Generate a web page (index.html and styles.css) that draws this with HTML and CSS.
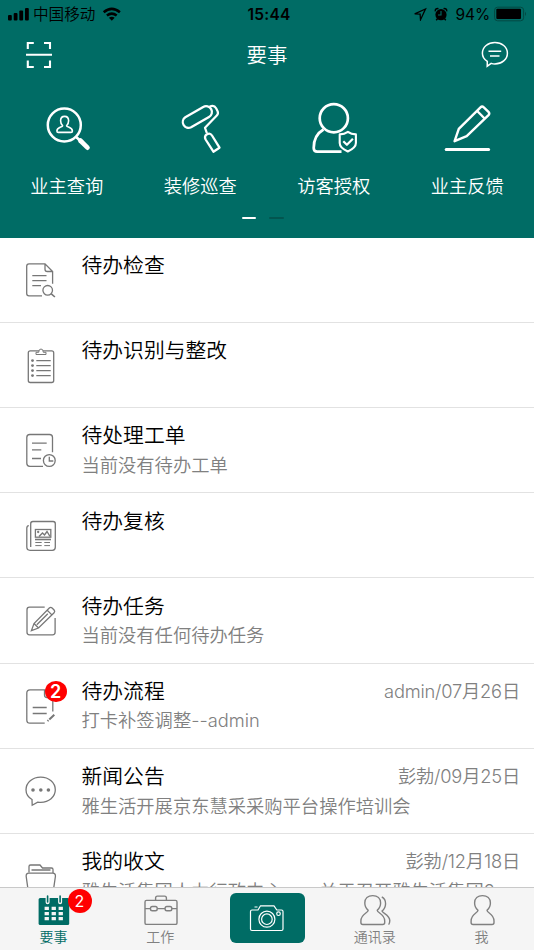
FILE: index.html
```html
<!DOCTYPE html>
<html lang="zh-CN">
<head>
<meta charset="utf-8">
<title>要事</title>
<link rel="stylesheet" href="styles.css">
</head>
<body>
<div class="screen">
  <header class="top">
    <div class="status">
      <div class="status-side">
        <svg class="signal" width="22" height="14" viewBox="8 6 22 14"><rect x="8" y="14" width="3.8" height="5.4" rx="1"/><rect x="13.7" y="12" width="3.8" height="7.4" rx="1"/><rect x="19.3" y="9.5" width="3.8" height="9.9" rx="1"/><rect x="25" y="7" width="3.8" height="12.4" rx="1"/></svg>
        <span class="carrier">中国移动</span>
        <svg class="wifi" width="20" height="14" viewBox="102.500 6 20 14"><g fill="none" stroke="#000" stroke-width="2.5"><path d="M104.200 11.300q8.100-6.800 16.200 0"/><path d="M107.400 14.600q4.900-3.900 9.800 0"/></g><path d="M109.400 16.700q2.900-2.100 5.800 0l-2.900 3z"/></svg>
      </div>
      <div class="clock">15:44</div>
      <div class="status-side status-right">
        <svg width="14" height="14" viewBox="416 6 14 14"><path d="M417.700 12.900 428.500 8l-5 10.700-.4-5.600z" fill="none" stroke="#000" stroke-width="1.300"/></svg>
        <svg class="alarm" width="14" height="14" viewBox="437 6 14 14"><circle cx="444" cy="13.700" r="5.600"/><path d="M438.300 10.300q-.6-3 3.200-2.700M449.700 10.300q.6-3-3.200-2.700M440.500 17.800l-1.300 1.500M447.500 17.800l1.300 1.500" fill="none" stroke="#000" stroke-width="1.400"/><path d="M444 10v4h-3" fill="none" stroke="#006c65" stroke-width="1.100"/></svg>
        <span class="percent">94%</span>
        <svg class="battery" width="34" height="16" viewBox="494 5.500 34 16"><rect x="494.600" y="6.700" width="29" height="13.600" rx="3" fill="none" stroke="#034943" stroke-width="1"/><rect x="496.300" y="8.300" width="24.700" height="10.200" rx="1"/><path d="M525 11.300q2 2 0 4.300z" fill="#034943"/></svg>
      </div>
    </div>
    <div class="nav">
      <svg width="30" height="30" viewBox="24 39.500 30 30" fill="none" stroke="#fff" stroke-width="2.100"><path d="M27.800 48.500v-6H33.800M44 42.500h6v6M50 60v6.500h-6M33.800 66.500h-6V60M26 54.300h26"/></svg>
      <h1>要事</h1>
      <svg width="30" height="30" viewBox="480 40 30 30" fill="none" stroke="#fff" stroke-width="1.500"><path d="M487.300 61.300c-3.100-1.900-4.900-4.900-4.900-8.100 0-6.100 5.600-10.800 12.500-10.800s12.500 4.700 12.500 10.800S501.800 64 494.900 64c-1.300 0-2.600-.2-3.700-.6l-4 2.800z"/><path d="M488.500 51.300h12.700M490 56h9.500"/></svg>
    </div>
    <div class="tiles">
      <div class="tile">
        <svg width="60" height="60" viewBox="36.700 99 60 60" fill="none" stroke="#fff" stroke-linejoin="round" stroke-linecap="round"><circle cx="64" cy="125" r="16.500" stroke-width="2.500"/><path d="M76.500 137.500l4 4" stroke-width="2.500"/><path d="M80 140.500l7.200 7.200" stroke-width="4.600"/><path d="M62.300 125.800c-1.500-1.500-2-3.200-2-5 0-2.700 1.600-4.400 4-4.400s4 1.700 4 4.400c0 1.800-.5 3.500-2 5 .3 1.500 5.800 1.400 5.800 5.200 0 1-.5 1.400-1.400 1.400H58c-.9 0-1.400-.4-1.400-1.400 0-3.800 5.400-3.700 5.700-5.200z" stroke-width="1.600"/></svg>
        <span>业主查询</span>
      </div>
      <div class="tile">
        <svg width="60" height="60" viewBox="170 99 60 60" fill="none" stroke="#fff" stroke-width="2.300" stroke-linejoin="round"><path d="M185.300 117.300 203.200 106.900a5.800 5.800 0 0 1 5.800 10.100L191.100 127.300a5.800 5.800 0 0 1-5.800-10z"/><path d="M209.500 106.700c3.500-1.600 5.300-.8 6.600 1.500l1.400 2.700c.8 1.600.5 3.200-.7 4.500L205 127.800l1.900 5.400" stroke-width="2.200"/><path d="M205.600 139.500 213.400 151.700 219.500 147.700 212 135.500c-2.600-4.100-8.600-.4-6.400 4z"/></svg>
        <span>装修巡查</span>
      </div>
      <div class="tile">
        <svg width="60" height="60" viewBox="303.500 99 60 60" fill="none" stroke="#fff" stroke-width="2.700" stroke-linejoin="round"><circle cx="333.300" cy="118.200" r="14.100"/><path d="M323 129.500c-6.600 3.800-9.800 10.500-9.800 18.500 0 2.600 1.200 3.600 3.500 3.600H341"/><path d="M339.200 134.400q4.800-.2 8.200-2.600 3.400 2.400 8 2.600v8.700c0 3.800-3.500 6.400-8.100 8.400-4.600-2-8.100-4.600-8.100-8.400z" stroke-width="2.100"/><path d="M342.800 141.200l3.600 3.600 6-6" stroke-width="2.200"/></svg>
        <span>访客授权</span>
      </div>
      <div class="tile">
        <svg width="60" height="60" viewBox="437 99 60 60" fill="none" stroke="#fff" stroke-width="2.400" stroke-linejoin="round"><path d="M454.600 141.200 458.800 128.800 480.500 107.300q1.600-1.600 3.300 0l4.700 4.600q1.500 1.600 0 3.200L466.700 136.200z"/><path d="M477.200 111l7.400 7.500"/><path d="M446.200 149.400H488.600" stroke-width="3" stroke-linecap="round"/></svg>
        <span>业主反馈</span>
      </div>
    </div>
    <div class="pager"><i class="on"></i><i></i></div>
  </header>

  <main class="list">
    <section class="row">
      <svg class="icon" viewBox="21 22 40 40"><path d="M52.600 45.700V33.500L45 25.900H29q-2.300 0-2.300 2.300V55.500q0 2.300 2.300 2.300H42M45 25.900v5.300q0 2.300 2.300 2.300h5.300M32.300 37.700H46.500M32.300 42.700H46.500M32.300 47.700H41"/><circle cx="47.700" cy="52.300" r="4.800"/><path d="M51.300 55.800l3.600 3.200" stroke-width="1.600"/></svg>
      <div class="body"><div class="line"><h2>待办检查</h2></div></div>
    </section>
    <section class="row">
      <svg class="icon" viewBox="21 22 40 40"><rect x="28.300" y="27.800" width="25.400" height="31.700" rx="2"/><path d="M36 31.500V29.300h2.700q0-3.300 2.300-3.300t2.300 3.300H46v2.200z" fill="#fff" stroke-width="1"/><path d="M36.300 37.600H50.700M36.300 42.600H50.700M36.300 47.600H50.700M36.300 52.600H50.700"/><g class="solid"><circle cx="32.500" cy="37.600" r="1.400"/><circle cx="32.500" cy="42.600" r="1.400"/><circle cx="32.500" cy="47.600" r="1.400"/><circle cx="32.500" cy="52.600" r="1.400"/></g></svg>
      <div class="body"><div class="line"><h2>待办识别与整改</h2></div></div>
    </section>
    <section class="row">
      <svg class="icon" viewBox="21 22 40 40"><path d="M52.500 44.300V29.500q0-3-3-3h-19.700q-3 0-3 3V55.300q0 3 3 3H43M32 35.200H46.700M32 41.900H41.300M32 50.500H41"/><circle cx="49.300" cy="52.500" r="5.900"/><path d="M49.300 48.800V53h4"/></svg>
      <div class="body"><div class="line"><h2>待处理工单</h2></div><p>当前没有待办工单</p></div>
    </section>
    <section class="row">
      <svg class="icon" viewBox="21 22 40 40"><path d="M30.700 54V30.700q0-2.200 2.200-2.200H53.100q2.200 0 2.200 2.200V54.300q0 3-3 3H30q-3.200 0-3.200-3.200V35.300q0-2.300 2-2.600"/><rect x="35.400" y="36.500" width="15.400" height="7.700"/><path d="M39 43.500l3.500-3.500 2 2 2.500-3.500 3 5" stroke-width="1.400"/><circle cx="38.200" cy="39" r=".5"/><path d="M35 46.500H51" stroke-width="1.600"/><path d="M35.300 49.500h6.400M44.300 49.500H50M35.300 52.600h6.400M44.300 52.600H50" stroke-width="1"/></svg>
      <div class="body"><div class="line"><h2>待办复核</h2></div></div>
    </section>
    <section class="row">
      <svg class="icon" viewBox="21 22 40 40"><path d="M44.700 29.200H29.500q-2.500 0-2.500 2.500V54.300q0 2.500 2.500 2.500H52.600q2.500 0 2.500-2.500V40"/><path d="M31.400 52.600 34 45.500 49.300 30q1.400-1.200 2.800 0l2 2q1.200 1.400 0 2.800L38.500 50zM47.200 32.200l4.700 4.700M34 45.500l4.500 4.500M36.800 46.800l11-11"/></svg>
      <div class="body"><div class="line"><h2>待办任务</h2></div><p>当前没有任何待办任务</p></div>
    </section>
    <section class="row">
      <svg class="icon" viewBox="21 22 40 40"><path d="M52.800 47.500V33.500L45 25.900H30q-3.200 0-3.200 3.200V55.900q0 3.200 3.200 3.200H44.700M44.500 26v5q0 2.500 2.500 2.500h5.800M32.700 43.500H46.700M32.700 49.500H46.700"/><path d="M47.500 57l1-.8M49.300 55.500l5-4.800" stroke-width="2"/></svg>
      <b class="badge row-badge">2</b>
      <div class="body"><div class="line"><h2>待办流程</h2><time>admin/07月26日</time></div><p>打卡补签调整--admin</p></div>
    </section>
    <section class="row">
      <svg class="icon" viewBox="21 22 40 40"><path d="M32 50.500c-3.800-2.200-6-5.700-6-9.700 0-7.200 6.500-12.700 14.700-12.700s14.600 5.500 14.600 12.700-6.400 12.500-14.600 12.500c-1 0-2-.1-3-.2l-5.500 3.100z"/><g class="solid"><circle cx="33" cy="41" r="1.800"/><circle cx="40.800" cy="41" r="1.800"/><circle cx="48.400" cy="41" r="1.800"/></g></svg>
      <div class="body"><div class="line"><h2>新闻公告</h2><time>彭勃/09月25日</time></div><p>雅生活开展京东慧采采购平台操作培训会</p></div>
    </section>
    <section class="row">
      <svg class="icon" viewBox="21 22 40 40"><path d="M29 38.500V32.500q0-1.500 1.500-1.500H40l2.500 3H51.500q1.500 0 1.500 1.500v3.500M31.500 36H50.500" /><path d="M26.200 42.500q-.3-3.300 2.700-3.300H52.700q3 0 2.700 3.300L53 59H28.500z"/></svg>
      <div class="body"><div class="line"><h2>我的收文</h2><time>彭勃/12月18日</time></div><p>雅生活集团人力行政中心——关于召开雅生活集团2…</p></div>
    </section>
  </main>

  <nav class="tabs">
    <div class="tab active">
      <svg width="48" height="34" viewBox="29.400 893 48 34"><rect x="39" y="898" width="30.600" height="27" rx="1.500" fill="#006c65"/><path d="M48 895.500v6.800M60.500 895.500v6.800" stroke="#f5f5f5" stroke-width="4" stroke-linecap="round"/><path d="M48 896v6M60.500 896v6" stroke="#006c65" stroke-width="1.600" stroke-linecap="round"/><path d="M45 908.400h4.300m2.700 0h4.300m2.700 0h4.300M45 913.600h4.300m2.700 0h4.300m2.700 0h4.300M45 918.600h4.300m2.700 0h4.300m2.700 0h4.300" stroke="#f5f5f5" stroke-width="3.300"/></svg>
      <b class="badge tab-badge">2</b>
      <span>要事</span>
    </div>
    <div class="tab">
      <svg width="48" height="34" viewBox="136.200 893 48 34"><rect x="145.200" y="900.400" width="32" height="24" rx="1.500"/><path d="M155.800 900.400v-2.500q0-1.800 1.800-1.800h7.200q1.800 0 1.800 1.800v2.500M145.200 908.600h5.500M157.500 908.600h7.700M172 908.600h5.200"/><rect x="150.700" y="906.500" width="6.700" height="4.200" rx="1.800"/><rect x="165.300" y="906.500" width="6.700" height="4.200" rx="1.800"/></svg>
      <span>工作</span>
    </div>
    <div class="tab tab-camera">
      <div class="camera">
        <svg width="40" height="32" viewBox="247 902 40 32" fill="none" stroke="#fff" stroke-width="1.200" stroke-linejoin="round"><path d="M252 910h6l2.500-4.200H274l2.800 4.200H281.500q1.500 0 1.500 1.500V929q0 1.500-1.500 1.500H252q-1.500 0-1.500-1.500V911.500q0-1.500 1.500-1.500zM254.500 907h3"/><circle cx="266.900" cy="919.200" r="8"/><circle cx="266.900" cy="919.200" r="5.300"/><circle cx="278.500" cy="913.700" r="1.800"/></svg>
      </div>
    </div>
    <div class="tab shifted">
      <svg width="48" height="34" viewBox="350.500 893 48 34"><path d="M367.700 910.300c-2.300-2-3.400-4.500-3.400-7.300 0-4.500 3.200-7.400 7.900-7.400s7.900 2.900 7.900 7.400c0 2.800-1.100 5.300-3.400 7.300 0 2.800 7.500 3.300 7.500 10.700v1.500q0 2-2 2H362.400q-2 0-2-2V921c0-7.400 7.300-7.900 7.300-10.700zM381.300 896.900c5.300 3 4.700 10.500.2 14.200 1 2.500 7.600 4 7.800 9.500q0 2.500-1.200 4"/></svg>
      <span>通讯录</span>
    </div>
    <div class="tab shifted">
      <svg width="48" height="34" viewBox="457.800 893 48 34"><path d="M477.800 910.300c-2.300-2-3.400-4.500-3.400-7.300 0-4.500 3.200-7.400 7.900-7.400s7.900 2.900 7.900 7.400c0 2.800-1.100 5.300-3.400 7.300 0 2.800 7 3.300 7 10.700v1.500q0 2-2 2H472.900q-2 0-2-2V921c0-7.400 6.900-7.900 6.900-10.700z"/></svg>
      <span>我</span>
    </div>
  </nav>
</div>
</body>
</html>
```
FILE: styles.css
```css
* { box-sizing: border-box; }
body {
  margin: 0;
  font-family: Inter, "Noto Sans CJK SC", sans-serif;
  font-weight: 350;
  color: #000;
  background: #fff;
}
h1, h2, p { margin: 0; font-weight: inherit; }
svg { display: block; flex: none; }
.screen {
  width: 534px;
  height: 950px;
  display: flex;
  flex-direction: column;
  overflow: hidden;
}
.top {
  flex: none;
  height: 237.600px;
  background: #006c65;
  color: #fff;
}
.status {
  height: 27px;
  padding: 0 6px 0 8px;
  display: grid;
  grid-template-columns: 1fr auto 1fr;
  align-items: center;
  color: #000;
  line-height: 27px;
}
.status-side { display: flex; align-items: center; }
.status-right { justify-content: flex-end; }
.status-right svg:first-child { margin-right: 2px; }
.carrier { font-size: 15.600px; margin-left: 3px; padding-top: 1px; }
.wifi { margin-left: 7px; }
.clock { font-size: 15.500px; font-weight: 600; letter-spacing: 0.200px; padding-left: 2px; }
.alarm { margin-left: 5px; }
.percent { font-size: 15.500px; font-weight: 400; letter-spacing: -0.100px; margin: 0 4px 0 7px; }
.nav {
  height: 55px;
  padding: 0 24px;
  display: flex;
  align-items: center;
  justify-content: space-between;
}
.nav h1 { font-size: 20.500px; line-height: 30px; padding-top: 2px; }
.tiles {
  display: grid;
  grid-template-columns: repeat(4, 1fr);
  padding-top: 17px;
}
.tile {
  display: flex;
  flex-direction: column;
  align-items: center;
  font-size: 18.300px;
  line-height: 26px;
}
.tile span { margin-top: 14px; }
.pager {
  display: flex;
  justify-content: center;
  gap: 13px;
  padding: 17.500px 9px 0 0;
}
.pager i { width: 14.500px; height: 2.600px; border-radius: 2px; background: #02554f; }
.pager .on { background: #fff; }
.list { flex: 1; min-height: 0; overflow: hidden; }
.row {
  position: relative;
  display: flex;
  height: 85.200px;
  padding: 0 14px 0 21px;
  border-bottom: 1px solid #e2e2e2;
}
.icon {
  width: 40px;
  height: 40px;
  margin-top: 22px;
  fill: none;
  stroke: #777;
  stroke-width: 1.300;
}
.solid { fill: #777; stroke: none; }
.body { flex: 1; min-width: 0; padding: 13.400px 0 0 20.500px; }
.line { display: flex; justify-content: space-between; height: 29.500px; line-height: 30px; }
.line h2 { font-size: 20.800px; }
.line time, .body p { font-size: 18.300px; color: #808080; }
.line time { letter-spacing: -0.200px; line-height: 29px; }
.body p { line-height: 28px; white-space: nowrap; }
.badge {
  position: absolute;
  display: grid;
  place-items: center;
  border-radius: 50%;
  background: #f00;
  color: #fff;
}
.row-badge { left: 44.500px; top: 17.200px; width: 22px; height: 21.500px; font-size: 18px; font-weight: 600; }
.tab-badge { left: 67.500px; top: 1.500px; width: 24px; height: 24px; font-size: 16px; font-weight: 400; }
.tabs {
  flex: none;
  height: 63.500px;
  display: grid;
  grid-template-columns: repeat(5, 1fr);
  background: #f5f5f5;
  border-top: 1px solid #c9c9c9;
}
.tab {
  position: relative;
  display: flex;
  flex-direction: column;
  align-items: center;
  padding-top: 5.500px;
  font-size: 14px;
  line-height: 20px;
  color: #808080;
}
.shifted { padding-left: 2px; }
.tab-camera { padding-left: 1px; }
.tab > svg { fill: none; stroke: #808080; stroke-width: 1.400; }
.tab.active > svg { stroke: none; }
.tab.active { color: #006c65; }
.camera {
  width: 75px;
  height: 50px;
  border-radius: 6px;
  background: #006c65;
  display: grid;
  place-items: center;
}
```
